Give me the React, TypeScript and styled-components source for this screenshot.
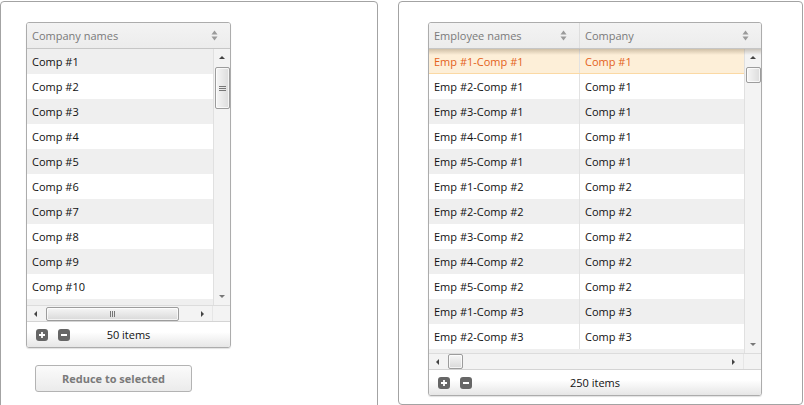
import styled, { createGlobalStyle } from "styled-components"

const GlobalStyle = createGlobalStyle`
    html, body {
        margin: 0;
        padding: 0;
        background: #fff;
        font-family: "Open Sans", "DejaVu Sans", sans-serif;
        font-size: 11px;
        overflow: hidden;
    }
`

const Page = styled.div`
    display: flex;
    align-items: flex-start;
    gap: 20px;
    padding-top: 1px;
`

const Panel = styled.section<{ $width: number; $height: number; $padLeft: number }>`
    box-sizing: border-box;
    width: ${(p) => p.$width}px;
    height: ${(p) => p.$height}px;
    border: 1px solid #a3a3a3;
    border-radius: 4px;
    padding: 20px 0 0 ${(p) => p.$padLeft}px;
    display: flex;
    flex-direction: column;
    align-items: flex-start;
`

const Grid = styled.div<{ $width: number }>`
    width: ${(p) => p.$width}px;
    border: 1px solid #acacac;
    border-radius: 3px;
    display: flex;
    flex-direction: column;
    overflow: hidden;
    box-shadow: 0 1px 1px rgba(0, 0, 0, 0.12);
`

const Header = styled.div<{ $cols: string }>`
    height: 25px;
    display: grid;
    grid-template-columns: ${(p) => p.$cols};
    background: linear-gradient(#f3f3f3, #ececec);
    border-bottom: 1px solid #c6c6c6;
    color: #7a7a7a;
`

const HeaderCell = styled.div<{ $divider?: boolean }>`
    display: flex;
    align-items: center;
    justify-content: space-between;
    padding: 0 12px 0 5px;
    border-left: ${(p) => (p.$divider ? "1px solid #dedede" : "none")};
`

const SortIcon = () => (
    <svg width="7" height="11" viewBox="0 0 7 11">
        <path d="M3.5 0.5 L6.5 4.5 L0.5 4.5 Z" fill="#9a9a9a" />
        <path d="M3.5 10.5 L6.5 6.5 L0.5 6.5 Z" fill="#9a9a9a" />
    </svg>
)

const Body = styled.div<{ $height: number; $shadow?: boolean }>`
    height: ${(p) => p.$height}px;
    display: flex;
    position: relative;
    overflow: hidden;

    &::before {
        content: "";
        display: ${(p) => (p.$shadow ? "block" : "none")};
        position: absolute;
        left: 0;
        right: 0;
        top: 0;
        height: 6px;
        background: linear-gradient(rgba(90, 70, 40, 0.28), rgba(90, 70, 40, 0));
        pointer-events: none;
    }
`

/* the grey strip under the last full row is the next (odd) row peeking in */
const Rows = styled.div`
    flex: 1;
    overflow: hidden;
    background: #efefef;
`

const Row = styled.div<{ $cols: string; $odd: boolean; $selected?: boolean }>`
    box-sizing: border-box;
    height: 25px;
    display: grid;
    grid-template-columns: ${(p) => p.$cols};
    align-items: center;
    background: ${(p) => (p.$selected ? "#fdefd8" : p.$odd ? "#efefef" : "#fff")};
    color: ${(p) => (p.$selected ? "#e4621a" : "#111")};
    border-bottom: ${(p) => (p.$selected ? "1px solid #fbd9a4" : "none")};
`

const Cell = styled.div<{ $divider?: boolean }>`
    height: 100%;
    display: flex;
    align-items: center;
    padding-left: 5px;
    box-sizing: border-box;
    white-space: nowrap;
    border-left: ${(p) => (p.$divider ? "1px solid #e2e2e2" : "none")};
`

const VScroll = styled.div`
    width: 17px;
    flex: none;
    background: #f3f3f3;
    border-left: 1px solid #e0e0e0;
    display: flex;
    flex-direction: column;
    align-items: center;
    justify-content: space-between;
    padding: 7px 0 7px;
    box-sizing: border-box;
`

const VTrack = styled.div`
    flex: 1;
    width: 100%;
    display: flex;
    flex-direction: column;
    align-items: center;
    padding-top: 8px;
`

const Arrow = styled.span<{ $dir: "up" | "down" | "left" | "right" }>`
    width: 0;
    height: 0;
    flex: none;
    border: 3px solid transparent;
    ${(p) =>
        p.$dir === "up"
            ? "border-bottom: 3px solid #444; border-top-width: 0;"
            : p.$dir === "down"
            ? "border-top: 3px solid #777; border-bottom-width: 0;"
            : p.$dir === "left"
            ? "border-right: 3px solid #444; border-left-width: 0;"
            : "border-left: 3px solid #444; border-right-width: 0;"}
`

const Thumb = styled.div<{ $w: number; $h: number }>`
    box-sizing: border-box;
    width: ${(p) => p.$w}px;
    height: ${(p) => p.$h}px;
    border: 1px solid #9c9c9c;
    border-radius: 2px;
    background: linear-gradient(90deg, #f6f6f6, #dcdcdc);
    display: flex;
    align-items: center;
    justify-content: center;
    box-shadow: inset 0 0 0 1px rgba(255, 255, 255, 0.7);
`

const HThumb = styled(Thumb)`
    background: linear-gradient(#f6f6f6, #d9d9d9);
`

const Grip = styled.div<{ $vertical?: boolean }>`
    display: flex;
    flex-direction: ${(p) => (p.$vertical ? "column" : "row")};
    gap: 1px;

    & > i {
        display: block;
        background: #777;
        width: ${(p) => (p.$vertical ? "7px" : "1px")};
        height: ${(p) => (p.$vertical ? "1px" : "6px")};
    }
`

const HScroll = styled.div`
    height: 16px;
    box-sizing: border-box;
    border-top: 1px solid #dcdcdc;
    background: #f3f3f3;
    display: flex;
    align-items: center;
    padding: 0 0 0 7px;
    gap: 9px;
`

const HTrack = styled.div`
    flex: 1;
    display: flex;
    align-items: center;
`

const HCorner = styled.div`
    width: 17px;
    align-self: stretch;
    border-left: 1px solid #e6e6e6;
    margin-left: -1px;
`

const Footer = styled.div`
    height: 25px;
    border-top: 1px solid #d4d4d4;
    background: linear-gradient(#ffffff 40%, #e6e6e6);
    display: grid;
    grid-template-columns: 1fr auto 1fr;
    align-items: center;
    color: #111;
`

const FooterTools = styled.div`
    display: flex;
    gap: 10px;
    padding-left: 9px;
`

const ToolIcon = styled.span`
    width: 12px;
    height: 12px;
    border-radius: 3px;
    background: #666;
    display: flex;
    align-items: center;
    justify-content: center;
`

const PlusIcon = () => (
    <ToolIcon>
        <svg width="8" height="8" viewBox="0 0 8 8">
            <path d="M4 1 V7 M1 4 H7" stroke="#fff" strokeWidth="1.8" />
        </svg>
    </ToolIcon>
)

const MinusIcon = () => (
    <ToolIcon>
        <svg width="8" height="8" viewBox="0 0 8 8">
            <path d="M1 4 H7" stroke="#fff" strokeWidth="1.8" />
        </svg>
    </ToolIcon>
)

const Button = styled.button`
    margin: 17px 0 0 9px;
    width: 157px;
    height: 27px;
    border: 1px solid #b3b3b3;
    border-radius: 3px;
    background: linear-gradient(#fbfbfb, #ebebeb);
    color: #7a7a7a;
    font-family: "Open Sans", "DejaVu Sans", sans-serif;
    font-weight: bold;
    font-size: 11px;
    padding: 0;
`

const companies = Array.from({ length: 10 }, (_, i) => `Comp #${i + 1}`)
const employees = Array.from({ length: 12 }, (_, i) => ({
    name: `Emp #${(i % 5) + 1}-Comp #${Math.floor(i / 5) + 1}`,
    company: `Comp #${Math.floor(i / 5) + 1}`,
}))

const App = () => {
    return (
        <>
            <GlobalStyle />
            <Page>
                <Panel $width={378} $height={420} $padLeft={25}>
                    <Grid $width={203}>
                        <Header $cols="1fr">
                            <HeaderCell>
                                Company names <SortIcon />
                            </HeaderCell>
                        </Header>
                        <Body $height={256}>
                            <Rows>
                                {companies.map((c, i) => (
                                    <Row key={c} $cols="1fr" $odd={i % 2 === 0}>
                                        <Cell>{c}</Cell>
                                    </Row>
                                ))}
                            </Rows>
                            <VScroll>
                                <Arrow $dir="up" />
                                <VTrack>
                                    <Thumb $w={15} $h={42}>
                                        <Grip $vertical>
                                            <i />
                                            <i />
                                            <i />
                                        </Grip>
                                    </Thumb>
                                </VTrack>
                                <Arrow $dir="down" />
                            </VScroll>
                        </Body>
                        <HScroll>
                            <Arrow $dir="left" />
                            <HTrack>
                                <HThumb $w={133} $h={14}>
                                    <Grip>
                                        <i />
                                        <i />
                                        <i />
                                    </Grip>
                                </HThumb>
                            </HTrack>
                            <Arrow $dir="right" />
                            <HCorner />
                        </HScroll>
                        <Footer>
                            <FooterTools>
                                <PlusIcon />
                                <MinusIcon />
                            </FooterTools>
                            <span>50 items</span>
                        </Footer>
                    </Grid>
                    <Button>Reduce to selected</Button>
                </Panel>
                <Panel $width={405} $height={404} $padLeft={29}>
                    <Grid $width={332}>
                        <Header $cols="150px 1fr">
                            <HeaderCell>
                                Employee names <SortIcon />
                            </HeaderCell>
                            <HeaderCell $divider>
                                Company <SortIcon />
                            </HeaderCell>
                        </Header>
                        <Body $height={304} $shadow>
                            <Rows>
                                {employees.map((e, i) => (
                                    <Row
                                        key={e.name}
                                        $cols="150px 1fr"
                                        $odd={i % 2 === 0}
                                        $selected={i === 0}
                                    >
                                        <Cell>{e.name}</Cell>
                                        <Cell $divider>{e.company}</Cell>
                                    </Row>
                                ))}
                            </Rows>
                            <VScroll>
                                <Arrow $dir="up" />
                                <VTrack>
                                    <Thumb $w={15} $h={16} />
                                </VTrack>
                                <Arrow $dir="down" />
                            </VScroll>
                        </Body>
                        <HScroll>
                            <Arrow $dir="left" />
                            <HTrack>
                                <HThumb $w={15} $h={15} />
                            </HTrack>
                            <Arrow $dir="right" />
                            <HCorner />
                        </HScroll>
                        <Footer>
                            <FooterTools>
                                <PlusIcon />
                                <MinusIcon />
                            </FooterTools>
                            <span>250 items</span>
                        </Footer>
                    </Grid>
                </Panel>
            </Page>
        </>
    )
}

export default App
